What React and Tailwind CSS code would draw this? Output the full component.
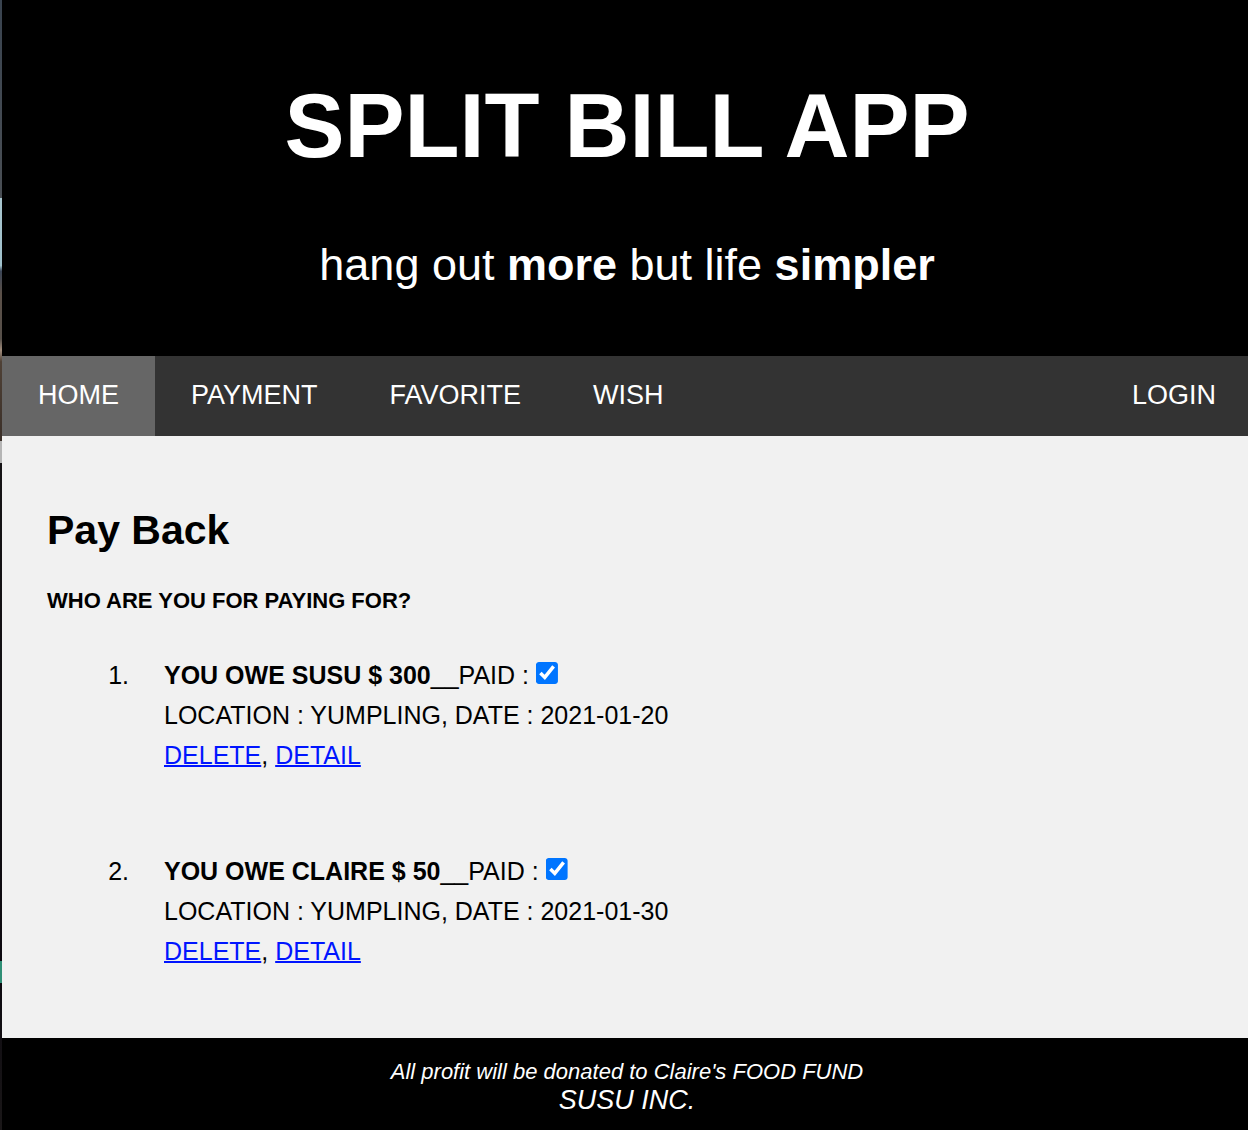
const bills = [
  { id: 1, name: "SUSU", amount: 300, date: "2021-01-20" },
  { id: 2, name: "CLAIRE", amount: 50, date: "2021-01-30" },
];

function NavLink({ children, active }) {
  return (
    <a href="#" className={`flex h-20 items-center px-9 pb-0.5 ${active ? "bg-[#666666]" : ""}`}>
      {children}
    </a>
  );
}

function Bill({ bill }) {
  return (
    <li className="pl-7">
      <div>
        <b>YOU OWE {bill.name} $ {bill.amount}</b>__
        <label htmlFor={`paid-${bill.id}`}>PAID :</label>{" "}
        <input
          id={`paid-${bill.id}`}
          type="checkbox"
          defaultChecked
          className="size-[22px] [clip-path:inset(0_round_3px)]"
        />
      </div>
      <div>LOCATION : YUMPLING, DATE : {bill.date}</div>
      <div>
        <a href="#" className="text-[#0015ff] underline decoration-2">DELETE</a>,{" "}
        <a href="#" className="text-[#0015ff] underline decoration-2">DETAIL</a>
      </div>
    </li>
  );
}

export default function App() {
  return (
    <div className="flex min-h-screen font-['Liberation_Sans',Arial,sans-serif] text-black">
      <div className="w-0.5 shrink-0 bg-[linear-gradient(#39434f,#4a4f55_17.5%,#a9c6cf_17.5%,#9fc0cb_23.5%,#3b4556_24%,#5b5048_26%,#57504a_30%,#a08c7c_31%,#4f4136_32%,#3a2f28_39%,#b5b5b5_39%,#b5b5b5_41%,#161416_41%,#0d0a10_85%,#2f8f76_85%,#2f8f76_87%,#0d0a10_87%,#1a1718)]" />
      <div className="flex min-w-0 grow flex-col bg-[#f1f1f1]">
        <header className="bg-black pt-[72px] pb-[61px] pl-1 text-center text-white">
          <h1 className="text-[90px] leading-[108px] font-bold">SPLIT BILL APP</h1>
          <p className="mt-[55px] text-[45px] leading-[60px]">
            hang out <b>more</b> but life <b>simpler</b>
          </p>
        </header>
        <nav className="flex justify-between bg-[#333333] text-[27px] text-white">
          <div className="flex">
            <NavLink active>HOME</NavLink>
            <NavLink>PAYMENT</NavLink>
            <NavLink>FAVORITE</NavLink>
            <NavLink>WISH</NavLink>
          </div>
          <a href="#" className="flex h-20 items-center pr-8 pb-0.5">LOGIN</a>
        </nav>
        <main className="grow px-[45px] pt-[68px] pb-16">
          <h2 className="text-[41px] leading-[52px] font-bold">Pay Back</h2>
          <h3 className="mt-7 text-[22px] leading-[34px] font-bold">WHO ARE YOU FOR PAYING FOR?</h3>
          <ol className="mt-[37px] flex list-decimal flex-col gap-[76px] pl-[89px] text-[25px] leading-10">
            {bills.map((bill) => (
              <Bill key={bill.id} bill={bill} />
            ))}
          </ol>
        </main>
        <footer className="bg-black pt-5 pb-4 pl-1 text-center text-white italic">
          <p className="text-[22px] leading-7">All profit will be donated to Claire's FOOD FUND</p>
          <p className="text-[27px] leading-7">SUSU INC.</p>
        </footer>
      </div>
    </div>
  );
}
